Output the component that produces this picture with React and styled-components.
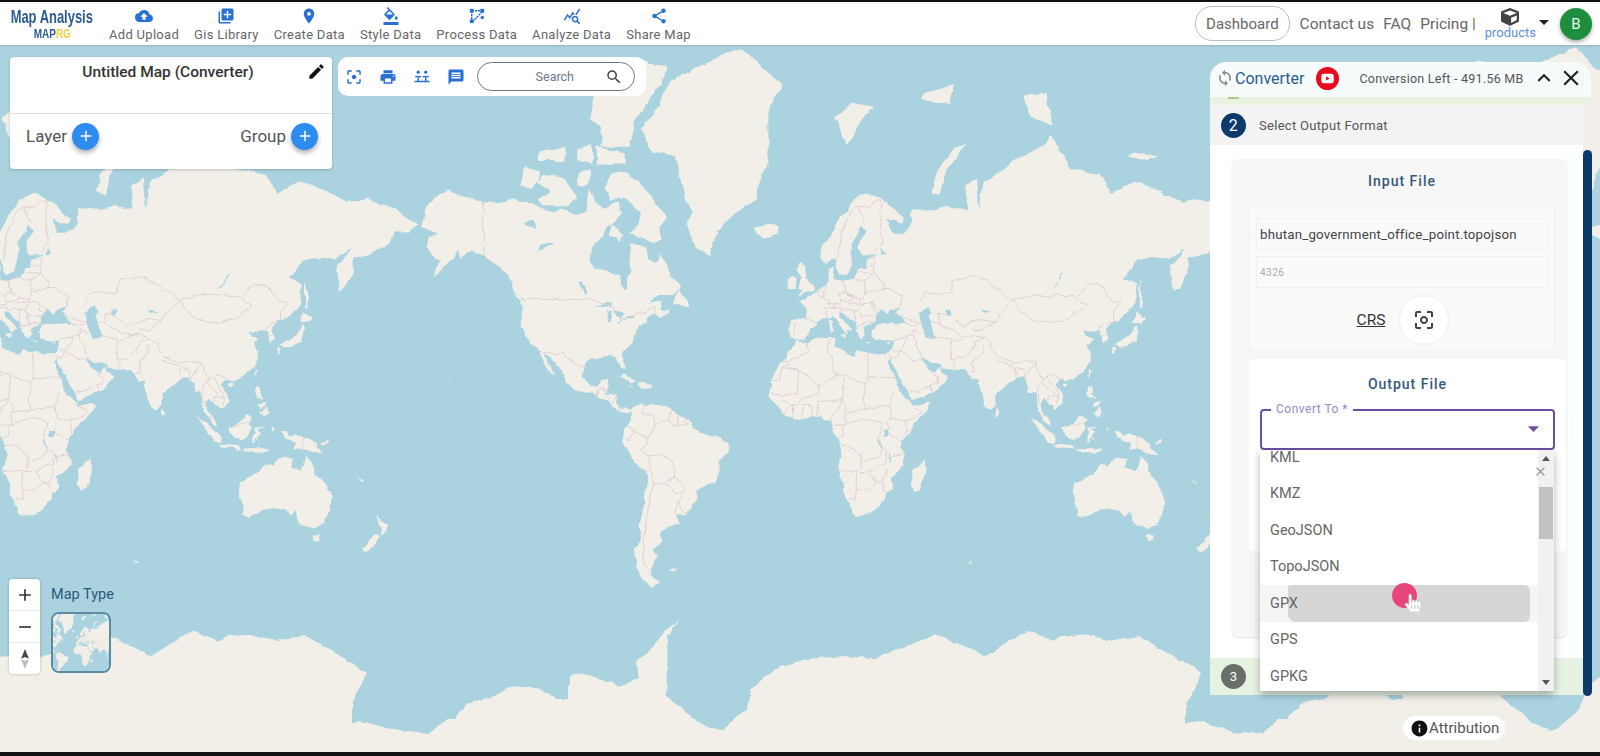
import React from 'react';
import styled, { createGlobalStyle } from 'styled-components';
import {
  MdCloudUpload,
  MdLibraryAdd,
  MdLocationOn,
  MdFormatColorFill,
  MdQueryStats,
  MdShare,
  MdEdit,
  MdAdd,
  MdRemove,
  MdFilterCenterFocus,
  MdPrint,
  MdMessage,
  MdSearch,
  MdArrowDropDown,
  MdKeyboardArrowUp,
  MdClose,
  MdCenterFocusWeak,
  MdSync,
  MdInfo,
  MdNavigation,
} from 'react-icons/md';
import { FaCube, FaHandPointer } from 'react-icons/fa';

const WORLD_WIDTH = 834;
const CENTER_X = 810;
const EQUATOR_Y = 430;

const px = (lon) => CENTER_X + (lon * WORLD_WIDTH) / 360;
const py = (lat) =>
  EQUATOR_Y -
  (WORLD_WIDTH / (2 * Math.PI)) *
    Math.log(Math.tan(Math.PI / 4 + (lat * Math.PI) / 360));

const project = (line) =>
  line
    .trim()
    .split(/\s+/)
    .map((pair) => {
      const [lon, lat] = pair.split(',').map(Number);
      return `${px(lon).toFixed(1)},${py(lat).toFixed(1)}`;
    })
    .join(' ');

// rough coastlines, lon,lat
const LAND = [
  // north america
  '-168,65.6 -166,68.3 -162,70.3 -156.6,71.3 -150,70.5 -141,69.7 -135,69.3 -128,70.2 -124.5,69.5 -120,69.5 -115,68.5 -110,68 -108,68.5 -102,67.8 -97,68 -95,71.5 -92,69.5 -88,68.8 -85,69.5 -82,69.5 -81.5,68 -84,66.5 -87,65.5 -90,64 -93,62 -94.5,59 -92.5,57 -88,56.5 -85,55.3 -82.3,55 -82,53 -80,51.3 -79,52 -79,54.5 -77,56 -78,58.5 -77.5,60.5 -78,62.4 -74,62.2 -70,61 -69.5,59 -66,58.5 -64.5,60.3 -62,58 -60.5,55.5 -56,53 -55.8,51.8 -60,50.2 -65,50.2 -67,49.3 -70,47.5 -65,49 -64.5,47.5 -65,46 -61,46 -60,46.8 -61,45.3 -65,43.6 -66.5,44.5 -67,45 -70,43.7 -70.5,42 -74,40.6 -75.5,38 -76,35.5 -78,34 -81,32 -81.3,30 -80,27 -80.5,25.2 -81.8,26 -82.8,28 -84,30 -86,30.4 -89.5,30.2 -89.5,29.2 -92,29.6 -94.5,29.5 -97,28 -97.5,25.5 -97.8,22.5 -96,19.2 -94.5,18.2 -91.5,18.5 -90.5,21 -87,21.5 -87.5,19 -88.5,16 -86,15.9 -83.5,15.2 -83.6,11 -82,9 -79.5,9.5 -77.4,8.7 -78,7.5 -80,7.3 -81.5,7.7 -83,8.3 -85.5,10 -87.5,13 -91,14 -94,16 -96.5,15.7 -101,17.4 -105,19.5 -105.7,22 -109,26 -112.5,30 -114.7,31.7 -114.3,30 -111,25 -109.5,23 -112,24.8 -115,28 -117,32.5 -120.5,34.5 -122.5,37.5 -124.3,40.3 -124.5,43 -124,47 -124.7,48.4 -123,49 -127,51 -130,54.5 -133,57 -137,58.5 -140,59.7 -146,60.8 -151,59.5 -152,61 -154,59 -158,57 -163,55 -159,58.5 -162,59.8 -165,61.5 -165,63.5 -161,64.3',
  // canadian arctic
  '-64,63 -68,62.5 -72,63.7 -78,64.5 -74,66 -73,68 -79,70 -86,70 -89,71.5 -85,73.7 -78,73.5 -71,71.5 -67,69.5 -62,67 -65,65',
  '-105,69 -115,69 -117.5,70 -112,71 -118,72.5 -115,73.5 -106,73 -101,70',
  '-120,71.5 -125,72 -123,74.3 -116,73.7',
  '-90,76.5 -78,76.5 -75,79 -65,81.5 -62,82.5 -72,83 -85,82 -90,80',
  '-92,74.6 -80,74.6 -80,75.8 -92,76.5',
  '-95,79 -88,78 -87,80.5 -92,81.5',
  '-117,75 -106,75 -106,76.5 -117,76',
  '-100,75 -94,74.5 -94,76.8 -100,76.3',
  '-100,72 -96,72 -94,74 -100,73.8',
  '-87,64 -82,62.7 -80.5,63.8 -85,66',
  '-59,47.7 -53,46.7 -52.7,47.8 -54,49.5 -56,51.5 -57.5,50.5',
  '-128,50.7 -125,50 -123.5,48.4 -125.5,48.9',
  // greenland, iceland
  '-73,78.2 -68,76 -58,75.5 -54,70 -51,68 -53,66 -50,62 -46,60.8 -43.5,59.9 -40,65 -32,68 -23,70 -22,72 -18,75 -18,80 -12,81.5 -30,83.6 -50,82.5 -62,81.5 -65,80',
  '-24,65.5 -22,64 -19,63.4 -14.5,64.4 -14,65.8 -16.5,66.5 -21,65.7',
  // arctic russia and svalbard
  '11,79 16,76.7 20,78.2 27,80 18,80.3',
  '52,71 56,70.7 58,73.5 68,76.8 62,76.2 54,73.5',
  '48,80.5 60,80.2 62,81.5 50,81',
  '95,79.2 105,78.5 102,81 92,80.8',
  '137,75.5 146,75 150,75.5 140,76',
  // eurasia
  '-9,37 -9.5,38.8 -8.8,43.2 -1.8,43.4 -1.2,46 -4.8,48.4 -1.5,48.7 1.5,50.5 4,52 8,53.8 8.2,57 10.8,57.7 10,54.5 14,54 19,54.5 21,57 24,57.2 24,59.3 28,59.7 30,60 25,60 22.5,60 21.3,61.5 22,63 25,65 22.5,65.8 17.5,62.5 18,60 16.5,56.3 14,55.5 13,55.5 11,58.5 10.5,59.3 7,58 5,59 5,62 10,64 14,67.5 19,70 25,71 31,70 41,67 40,66 33,66.8 35,64.5 40,64.5 44,66.2 44,68.5 54,68.5 60,69 68,68.5 67,72 72,73 73,68.5 75,72.5 81,73.5 87,75 100,76.5 104,77.7 113,74 125,73.5 130,71 140,72.5 150,71.5 160,69.7 170,70 180,68.8 185,67.5 190,66 187,64.5 181,65 179,62.5 170,60 163,59.5 163,56 160,53 156.7,51 155.5,56 156,57.8 163,61.5 155,59.3 148,59.5 142,59 135,54.7 141,53 140,48 135,43.7 130.5,42.5 127.5,39.5 129.3,37 126.5,34.5 126.5,37.5 125,39.6 121.5,39 118,39 119,37.3 122.5,37 119.5,35 121.7,31.5 121.5,29 118,24.5 114,22.3 110,21 108,21.6 106,19 109,15 109,11.5 105,8.7 105,10 103,11 100.8,13.5 99.5,11 100,8 103.5,4 104,1.4 101,3 100,6 98.3,8 98,14 97,16.5 94.5,16 94,18.5 91.5,22.7 88.5,21.7 86.5,20 82,16.5 80,15 80,11 78,8.5 76,10 73,17 72.8,21 70,21 69,22.5 67,25 61,25.2 57,25.7 56.5,27 51.5,28 48.5,30 48,29 50,26.5 51.5,25 54,24 56.3,26 56.5,24.2 59.7,22.5 58,20.2 55,17 52,16 45,13 43.3,12.8 42.7,16 39,21 35,28 34.8,29.5 33,28 32.5,30 32.5,31.2 34.3,31.3 36,36 33,36 30,36.3 27.3,37 26.5,39.3 29,41 35,42 41.5,41.5 38,44.5 37,45 39,47 35,46 33.5,44.5 31,46.5 28,44 28,41.7 26,40.8 23.5,40.2 24,38 22.5,36.5 20,39.5 19.3,42 14,45 12.3,45.3 12.5,44 16,41.8 18.4,40 16.5,39.5 16,38 13,41 10,44 6,43.2 3,43 3.2,41.7 0,40 -0.3,38.7 -2,36.8 -5.5,36',
  // africa
  '-5.9,35.8 -2,35.2 3,36.9 10,37.3 11,36.9 10.5,34 15,32.3 19,30.4 20,32.5 25,31.7 29,31 32.5,31.2 32.5,30 34,27 35.5,24 37.3,21 37.5,18.5 39.5,15.5 43,12 44,10.5 51,11.8 50.5,9 47,4.5 42,-1.5 39.5,-4.5 39.2,-8 40.5,-11 40.7,-15 35,-20 35.5,-24 32.8,-26 32.5,-28.5 28,-33 25.5,-34 20,-34.8 18.4,-34 18,-32 15,-27 14.5,-22 11.8,-17 13.7,-11 12,-5 9,-1 9.5,4 6,4.3 4.5,6.3 1,5.8 -2,4.8 -7.5,4.4 -11.5,7 -13.5,9.5 -16.7,12.5 -17.5,14.7 -16.3,19 -17,21 -15,24.5 -13,27.7 -10,29.5 -9.7,31.5 -6.8,34',
  '49.3,-12 50.5,-15.5 47.5,-24.7 45,-25.5 43.5,-23 44.3,-20 44,-17 47,-15',
  // south america
  '-77.4,8.7 -75.5,10.8 -72,12 -71.5,10.8 -68,11 -64,10.5 -62,10.7 -60,8.5 -57,6 -52,4.7 -50,1 -48,-1 -44.5,-2.5 -40,-3 -35.3,-5.5 -35,-9 -39,-13 -39,-17.5 -41,-22 -44.5,-23 -48.5,-25.7 -48.7,-28.5 -52,-32.5 -54,-34.5 -58.3,-34 -57,-37 -62,-39 -65,-41 -63.5,-42.7 -65.5,-45 -67.5,-46 -65.8,-47.5 -69,-51 -68.3,-52.5 -65,-55 -68,-55.7 -72,-54 -75,-51 -75.5,-46 -73,-42 -73.7,-38 -71.5,-30 -70.3,-20 -71,-17.5 -76,-14 -79,-8 -81.3,-5 -80,-2.5 -80.5,0 -78.8,2 -77.3,4 -77.5,7 -78,7.5',
  '-61,-51.5 -58,-51.5 -59,-52.3',
  // australia, nz
  '114,-22 113.5,-26 115,-31 115,-34.3 118,-35 124,-33 129,-31.6 134,-32.5 136,-35 138,-33 138.5,-35.5 140.5,-38 146,-39 150,-37.5 153,-32 153.5,-27 150.5,-23 146.5,-19 145.3,-15 142.6,-10.8 141.5,-15 140.5,-17.5 136,-15.5 136.7,-12 132.5,-11.5 130,-13 129,-15 125,-14.5 122,-18 117,-20.5',
  '145,-41 148.2,-41 148,-43 146.5,-43.5',
  '172.7,-34.5 175.5,-36.8 178.5,-37.8 176.8,-40 175,-41.5 174.7,-39',
  '172.7,-40.5 174.3,-41.7 171,-45 168.5,-46.6 166.5,-45.8 170,-43',
  // south east asia
  '131,-1 134,-0.8 135,-3.3 138,-1.7 144,-3.8 147.5,-6 147,-7 150.5,-10.5 147,-10 143,-9 138,-8.3 138,-5.5 133,-4',
  '109,1.5 111,1.5 113,3 115.5,5.5 117,7 119,5 117.7,3 119,1 116.5,-3.5 114.5,-4 111,-3 110,-1',
  '95.3,5.6 98,4 103.5,-1 106,-3 105.8,-5.8 103,-5 100.5,-2 97.5,2',
  '105.3,-6.5 108,-6.5 113,-7 114.5,-8.5 109,-7.9 106,-7.4',
  '119.5,-5.5 120.3,-3 121,-1 120,1 125,1.5 121.5,0.3 123,-1 121.5,-3 122.5,-5 121,-3.5 120.4,-5.5',
  '120.5,18.5 122.2,18.4 122,15 124,13 120.7,14 120,16',
  '122,7 125.5,9.7 126.5,7 124.5,6',
  '122,11.5 125.5,12 124.5,10 122.5,9.5',
  '115,-8.3 119,-8.3 122,-8.3 125,-8.3 127,-8.3 124,-10.2 120,-10 116,-9',
  '149,-5.5 152,-4.2 152,-5.5 150,-6.3',
  '164,-20.3 167,-22.3 166,-22.3',
  '127.5,1.5 128.5,1 128,-0.8',
  // east asia islands
  '121,25.2 122,25 120.8,22 120.1,23',
  '109,20 111,20 110,18.2 108.7,18.7',
  '80,9.7 81.8,7.5 80.5,6 79.8,7.5',
  '131,34.4 135,33.5 137,34.6 140.5,35.5 142,39.5 141.3,41.4 139.8,39.5 137,37 133,35.5',
  '130,33.5 132,33 131,31 130.2,31.5',
  '132.5,34 134.5,34.2 134,33',
  '140,41.8 141,45.5 145,43.5 143,42',
  '142,54.3 143.5,50 143,46.5 142,46.5 142,50',
  // europe islands
  '-5.5,50 1.5,51.3 1.7,52.8 -1,54.5 -2,56 -2,57.6 -5,58.6 -6,56.5 -3,54.8 -4.7,53 -5.2,51.8 -3,51.4',
  '-10,52 -6.2,52.2 -5.8,54.7 -8.2,55.2 -10,54',
  '8.6,43 9.7,42.5 9.6,39 8.5,39',
  '12.5,38 15.5,38.2 15,36.7',
  '23.5,35.6 26.3,35.3 25,34.9',
  '32.5,35 34.5,35.7 33.8,34.7',
  // caribbean
  '-84.8,22 -80,23.2 -75,20.7 -74.2,20.2 -77.7,19.9 -78,20.8 -82,22.6',
  '-74.4,18.5 -73,20 -69,19.7 -68.5,18.5 -71.5,17.8',
  '-78.3,18.4 -76.3,18.2 -77,17.8',
  '-156,20.4 -155,19.7 -155.7,19',
  '69,-49 70.5,-49.2 69.5,-49.8',
];

const LAKES = [
  '-92,46.8 -88,48.5 -85,47.8 -85,46.6 -88,46.9',
  '-87.8,42 -86.5,42 -85.5,45.6 -87,45.7',
  '-84.5,46 -80,45 -81.7,43.2 -83.5,43.8',
  '-83.3,41.6 -79,42.8 -79,43 -83,42.2',
  '-79.7,43.3 -76.3,43.5 -76.5,44.2 -79,43.9',
  '-124,66 -118,65.3 -120,67',
  '-117,61 -110,62.5 -112,62.8 -116,62',
  '-98,50.5 -96.5,50.5 -98,53.8 -99.5,53.5',
  '47,45 51,47 53,45 51,44 53,41 54,37 50,37 49,40 47.5,43',
  '58.5,46 61,46 60,44 58.5,44',
  '104,51.7 106,52.5 110,55.8 109,55.7 106,53',
  '74,46 79,45.5 74.5,45',
  '30.5,60 32.5,60.5 31,61.5',
  '32,0 34,0 34,-2.5 32,-2.7',
  '29,-4 29.8,-4 31,-8 30.5,-8',
  '34,-10 34.8,-11 35,-14 34.4,-13',
];

const BORDERS = [
  '-123,49 -95,49 -89,48 -84,46.5 -82.5,43 -79,43 -75,45 -71,45 -67.5,47 -67,45',
  '-141,69.7 -141,60 -137,58.5 -130,55',
  '-117,32.5 -111,31.3 -106.5,31.8 -103,29 -97.5,26',
  '-92,14.7 -91,17.5 -89,18 -89,16',
  '-88.5,15.8 -87,13',
  '-83.5,15 -85.5,11',
  '-83,8.5 -83,10',
  '-77.5,8.5 -77.3,7',
  '-72,12 -72.5,7 -67.5,6 -67,2 -70,-4.2 -75,-0.2 -78.8,1.5',
  '-80.3,-3.5 -78.5,-5 -75,-0.2',
  '-70,-4.2 -73,-9 -69.5,-11 -69,-16.5 -70,-17.5 -70.3,-18.3',
  '-69.5,-11 -65.3,-10 -60,-13.5 -58,-17.5 -58,-20',
  '-69,-17.5 -68,-23 -70,-33 -71.5,-40 -72,-50 -68.5,-52.5',
  '-68,-23 -62.5,-22 -58,-20 -54.3,-24 -54.5,-26 -58,-27 -62.5,-22',
  '-54.5,-26 -57.5,-30 -53.5,-33.7',
  '-57.5,-30 -58.3,-34',
  '-60,8.5 -60.7,5 -64,4 -67,2',
  '-60.7,5 -58.5,1.5 -57,2 -54,2.3 -51.7,4',
  '-57,6 -57,2',
  '-54,5.7 -54,2.3',
  '-1.8,43.4 3.2,42.4',
  '-8.8,42 -6.5,42 -7,37.2',
  '2.5,51 6,49.5 8,49 7.6,47.6',
  '6,46.3 7.6,47.6 10,47.3 10,46.3 6,46.3',
  '7.5,43.8 7,45.5',
  '10,46.5 13.7,46.5 13.7,45.6',
  '7,53.3 6,51 6,49.5',
  '14.3,54 15,51 12,50.3 13,48.5 13,47.6 10,47.4',
  '3.4,51.4 6,51.3',
  '15,51 19,49.4 23,49 24,51 23.5,54 19.5,54.4',
  '15,51 18.8,49.5',
  '13,48.7 17,48.7 18.8,49.5',
  '17,48 22,48.2 22.5,49',
  '16.5,47.5 17,48',
  '16.5,46.6 18.8,45.9 21,46.2 22.7,48 26.5,48.2 28.2,45.5 29.5,45.2',
  '21,46.2 22.5,44.4 27,44 28.5,43.7',
  '22.5,44.3 22.5,41.4 26.3,41.8 28,42',
  '26.3,41.8 26,40.8',
  '13.7,45.5 16.5,46.5',
  '19,45.9 19.3,42',
  '22.5,41.3 20.5,41 19.3,42',
  '20,39.7 20.5,41',
  '24,51 32,52 34,52 40,49.7 38.5,47',
  '23.5,54 28,56 32,53.5 32,52',
  '26.5,48.2 30,46',
  '21,56 26.5,56',
  '24.3,58 27.5,57.5',
  '28,59.5 27.5,57.5 28,56',
  '11.2,59 12.5,61 14,65 18,68.5 20.5,69 24,66',
  '20.5,69 25,68.8 28.5,69.8 30.5,69.8 30,65 31.5,62.8 28,60.5',
  '47,48 50,51 55,51 61,51 61.5,54 70,55 77,53.5 83,51 87,49.2',
  '87.5,49 98,50 106,50.3 114,50 116,48 119,47 111.5,43.5 105,41.7 96,42.8 91,45.5 87.5,49',
  '116,49.8 120,53 125,53 131,48 135,48.4 131,45 131,42.7',
  '124.5,40 128,41.8 130.7,42.5',
  '126.7,38 128.5,38.5',
  '87.5,49 82.5,45 80,42.2',
  '53,42 56,41.3 56,45 61,44 66,41 70,42 74,43 80,42.2',
  '70,40 74,39.5 80,42.2',
  '56,41.3 61,39.5 66.5,37.4',
  '54,37.3 61,36.5 61,35.3 66.5,37.4 71,38 75,37',
  '61,29.7 66,29.5 69.5,33 71,36 75,37',
  '61,35.3 61,29.7 63,27 61.6,25.1',
  '75,37 78,35.3 79,32.5 81,30 88,27.7 92,28 97,28.3',
  '80,28.8 88,26.5',
  '74.5,34.5 75,32 70,28 71,24.5 68,23.7',
  '88,26 89,22',
  '89,25.5 92.3,25 92.3,21 94,24 97,28 98.5,24 101,21.5 102,22.5 105.5,23 108,21.6',
  '101,21.5 98,19 98.5,15 99,11',
  '100.5,20 102,18 105,15',
  '102.5,22 104.5,19 107.5,15',
  '102.5,12 103,14 107.5,14.5 106,11',
  '100.2,6.5 102,6',
  '36,36 42,37 44.5,37.5 44.5,39.5',
  '37.5,45 40,43.5 48,42',
  '41.5,41.5 43.5,41 46.5,41.5',
  '44.5,39.7 48.5,38.5',
  '44.5,37.5 46,35 48,30',
  '42,37 41,34.5 39,32.5 44,29 48,29',
  '39,32.5 37,32.5 35.5,33',
  '35,29.5 37.5,30 39,32.5',
  '34.3,31.3 34.8,29.5',
  '43,16.5 47,17 52,19 55,20 55,22.5 52,24',
  '52,19 53,16.7',
  '-2,35 -1.5,32 -8.7,28 -13,27.7',
  '-8.7,27.3 -12,26 -13,21.3 -17,21.3',
  '-12,26 -5,25 -5.5,15.5 -12,14.8 -16.5,16',
  '-5,25 1,21 4,19 12,23.5',
  '8.5,37 7.5,33.5 9.5,30 10,25 12,23.5 15,23 24,19.5',
  '25,31.7 25,22 37,22',
  '25,22 24,19.5 22.5,13 24,8.7 33,10.5 34,10',
  '4,19 3.5,15.5 1,15 -3,13.5 -5.5,10.5 -8,10.3 -11.5,12.3 -12,14.8',
  '3.5,12 14,13 15.5,10 15,7.5 16,2',
  '2.7,6.3 3.5,12',
  '8.7,4.5 14,13',
  '15,23 14,13',
  '15,7.5 24,8.7',
  '16,2 18.5,3.5 27,5 31,3.7',
  '36.5,16 36,14.5 34,10 35,5 41,4 45,5 48,8 43,11',
  '41,4 41,-1.7',
  '34,4 34,0',
  '34,-1 39.2,-4.7',
  '30,-1 31,3.7',
  '30,-1 29,-4.5 30.5,-8 28.5,-12 24,-13 22,-11 17,-7 12.2,-6',
  '34.8,-11.5 40.5,-10.5',
  '30.5,-8 33,-9.5 33,-14 30.5,-15 25,-17.8',
  '22,-11 22,-16.5',
  '12,-17.2 23.5,-17.7',
  '20,-18 20,-28.5 17,-28.5',
  '20,-25 25,-25.5 29,-22 31.5,-22.3 33,-19 33,-16',
  '25.5,-18 29,-22',
  '31.5,-22.3 32,-26',
  '11,-3.5 14,-2.5 14,1.5',
  '9.7,2.2 16,2',
  '-13.2,12.6 -11.5,12.3',
  '-11.5,7 -10,8.5 -8,10.3',
  '-7.5,4.4 -8,7.5 -8,10.3',
  '-3,5 -3,10.9 0.5,11',
  '1.2,6.2 0.3,11',
  '141,-2.6 141,-9',
  '109.5,1.5 114,2.5 117.5,4.2',
];

// antarctic coast, already in page pixels
const ANTARCTICA =
  '398,770 398,731 429,734 444,719 454,719 467,703 490,698 513,686 541,689 556,699 569,699 569,676 584,674 610,681 620,687 638,679 635,661 648,653 663,633 679,619 668,636 666,696 694,719 709,728 724,729 747,708 750,691 763,679 781,666 807,659 845,656 868,659 891,652 906,647 933,634 967,647 985,656 1006,643 1028,631 1053,641 1062,636 1079,634 1109,641 1140,636 1171,654 1201,673 1196,686 1186,703 1186,724 1194,721 1232,731 1232,770';

const World = React.memo(function World() {
  return (
    <>
      <polygon points={ANTARCTICA} fill="#f2efe9" />
      {LAND.map((line, i) => (
        <polygon key={i} points={project(line)} fill="#f2efe9" />
      ))}
      {LAKES.map((line, i) => (
        <polygon key={i} points={project(line)} fill="#aad3df" />
      ))}
      {BORDERS.map((line, i) => (
        <polyline
          key={i}
          points={project(line)}
          fill="none"
          stroke="#dcc9cc"
          strokeWidth="0.8"
        />
      ))}
    </>
  );
});

// rough=true wobbles the straight polygon edges so coasts look less like a low-poly map
function WorldMap({ viewBox, rough }) {
  return (
    <svg viewBox={viewBox} width="100%" height="100%" preserveAspectRatio="xMidYMid slice">
      <defs>
        <filter id="coast" filterUnits="userSpaceOnUse" x="0" y="45" width="1600" height="720">
          <feTurbulence type="fractalNoise" baseFrequency="0.07" numOctaves="3" seed="4" />
          <feDisplacementMap in="SourceGraphic" scale="6" xChannelSelector="R" yChannelSelector="G" />
          <feGaussianBlur stdDeviation="0.45" />
        </filter>
      </defs>
      <rect x="-2000" y="-200" width="6000" height="1400" fill="#aad3df" />
      <g filter={rough ? 'url(#coast)' : undefined}>
        <g transform={`translate(${-WORLD_WIDTH} 0)`}>
          <World />
        </g>
        <World />
        <g transform={`translate(${WORLD_WIDTH} 0)`}>
          <World />
        </g>
      </g>
    </svg>
  );
}

function YoutubeIcon() {
  return (
    <svg width="23" height="23" viewBox="0 0 24 24">
      <circle cx="12" cy="12" r="12" fill="#e8091a" />
      <rect x="5.5" y="7" width="13" height="10" rx="2.5" fill="#fff" />
      <path d="M10.5 9.8v4.4l3.8-2.2z" fill="#e8091a" />
    </svg>
  );
}

function ProcessIcon() {
  return (
    <svg width="1em" height="1em" viewBox="0 0 24 24" fill="currentColor">
      <path d="M5 5h13M5 5v14M19 6l-12 13" stroke="currentColor" strokeWidth="2" fill="none" strokeDasharray="3 1" />
      <rect x="2.5" y="2.5" width="5" height="5" />
      <rect x="16.5" y="2.5" width="5" height="5" />
      <rect x="2.5" y="16.5" width="5" height="5" />
      <circle cx="19" cy="14" r="2.2" />
    </svg>
  );
}

function PinsIcon() {
  return (
    <svg width="1em" height="1em" viewBox="0 0 24 24" fill="currentColor">
      <circle cx="7" cy="5.5" r="2.2" />
      <circle cx="17" cy="5.5" r="2.2" />
      <rect x="3" y="10.5" width="8" height="2" />
      <rect x="13" y="10.5" width="8" height="2" />
      <rect x="2" y="17" width="20" height="2" />
      <rect x="6" y="12.5" width="2" height="5" />
      <rect x="16" y="12.5" width="2" height="5" />
    </svg>
  );
}

const NAV_ITEMS = [
  { label: 'Add Upload', Icon: MdCloudUpload },
  { label: 'Gis Library', Icon: MdLibraryAdd },
  { label: 'Create Data', Icon: MdLocationOn },
  { label: 'Style Data', Icon: MdFormatColorFill },
  { label: 'Process Data', Icon: ProcessIcon },
  { label: 'Analyze Data', Icon: MdQueryStats },
  { label: 'Share Map', Icon: MdShare },
];

const FORMATS = ['KMZ', 'GeoJSON', 'TopoJSON', 'GPX', 'GPS', 'GPKG'];

export default function App() {
  return (
    <Page>
      <GlobalStyle />
      <Navbar>
        <Logo>
          <LogoTitle>Map Analysis</LogoTitle>
          <LogoMark>
            MAP<span>RG</span>
          </LogoMark>
        </Logo>
        <NavItems>
          {NAV_ITEMS.map(({ label, Icon }) => (
            <NavItem key={label}>
              <Icon />
              {label}
            </NavItem>
          ))}
        </NavItems>
        <NavRight>
          <DashboardLink>Dashboard</DashboardLink>
          <NavLink>Contact us</NavLink>
          <NavLink>FAQ</NavLink>
          <NavLink>Pricing |</NavLink>
          <Products>
            <FaCube />
            products
          </Products>
          <Caret />
          <Avatar>B</Avatar>
        </NavRight>
      </Navbar>

      <MapArea>
        <MapLayer>
          <WorldMap viewBox="0 45 1600 707" rough />
        </MapLayer>

        <TitleCard>
          <TitleRow>
            <MapTitle>Untitled Map (Converter)</MapTitle>
            <EditIcon />
          </TitleRow>
          <LayerRow>
            <LayerGroup>
              Layer
              <AddButton>
                <MdAdd />
              </AddButton>
            </LayerGroup>
            <LayerGroup>
              Group
              <AddButton>
                <MdAdd />
              </AddButton>
            </LayerGroup>
          </LayerRow>
        </TitleCard>

        <ToolCard>
          <ToolIcon>
            <MdFilterCenterFocus />
          </ToolIcon>
          <ToolIcon>
            <MdPrint />
          </ToolIcon>
          <ToolIcon>
            <PinsIcon />
          </ToolIcon>
          <ToolIcon>
            <MdMessage />
          </ToolIcon>
          <SearchPill>
            <span>Search</span>
            <MdSearch />
          </SearchPill>
        </ToolCard>

        <ZoomControl>
          <ZoomButton>
            <MdAdd />
          </ZoomButton>
          <ZoomButton>
            <MdRemove />
          </ZoomButton>
          <ZoomButton>
            <Compass>
              <MdNavigation />
              <MdNavigation />
            </Compass>
          </ZoomButton>
        </ZoomControl>

        <MapType>
          <MapTypeLabel>Map Type</MapTypeLabel>
          <Thumb>
            <WorldMap viewBox="600 87 463 470" />
          </Thumb>
        </MapType>

        <Attribution>
          <MdInfo />
          Attribution
        </Attribution>

        <Panel>
          <PanelHeader>
            <PanelTitle>
              <MdSync />
              Converter
            </PanelTitle>
            <YoutubeIcon />
            <ConversionLeft>Conversion Left - 491.56 MB</ConversionLeft>
            <HeaderIcons>
              <MdKeyboardArrowUp />
              <MdClose />
            </HeaderIcons>
          </PanelHeader>
          <DoneStrip>
            <i />
          </DoneStrip>
          <PanelBody>
            <StepRow>
              <StepBadge>2</StepBadge>
              Select Output Format
            </StepRow>
            <PanelScroll>
              <InputCard>
                <CardHeading>Input File</CardHeading>
                <InputInner>
                  <Field>bhutan_government_office_point.topojson</Field>
                  <Field $muted>4326</Field>
                  <CrsRow>
                    <CrsLabel>CRS</CrsLabel>
                    <CrsButton>
                      <MdCenterFocusWeak />
                    </CrsButton>
                  </CrsRow>
                </InputInner>
                <OutputCard>
                  <CardHeading>Output File</CardHeading>
                  <SelectBox>
                    <SelectLabel>Convert To *</SelectLabel>
                    <SelectArrow />
                  </SelectBox>
                </OutputCard>
              </InputCard>
            </PanelScroll>
            <NextStep>
              <StepBadge $grey>3</StepBadge>
            </NextStep>
          </PanelBody>
          <Scrollbar />

          <Dropdown>
            <OptionList>
              <Option $cut>
                <span>KML</span>
              </Option>
              {FORMATS.map((name) => (
                <Option key={name} $hover={name === 'GPX'}>
                  <span>{name}</span>
                </Option>
              ))}
            </OptionList>
            <ListScroll>
              <ScrollArrow />
              <ScrollClose />
              <ScrollThumb />
              <ScrollArrow $down />
            </ListScroll>
            <Cursor>
              <FaHandPointer />
            </Cursor>
          </Dropdown>
        </Panel>
      </MapArea>
    </Page>
  );
}

const GlobalStyle = createGlobalStyle`
  html, body {
    margin: 0;
    padding: 0;
    height: 100%;
    overflow: hidden;
    background: #111;
  }
  body {
    font-family: Roboto, 'Liberation Sans', sans-serif;
  }
`;

const Page = styled.div`
  display: flex;
  flex-direction: column;
  width: 1600px;
  height: 756px;
  box-sizing: border-box;
  border-top: 2px solid #111;
  border-bottom: 4px solid #111;
`;

const Navbar = styled.header`
  display: flex;
  align-items: center;
  height: 43px;
  flex: none;
  background: #fff;
  padding: 0 8px 0 10px;
  box-shadow: 0 1px 2px rgba(0, 0, 0, 0.15);
  position: relative;
  z-index: 2;
`;

const Logo = styled.div`
  display: flex;
  flex-direction: column;
  align-items: center;
  width: 84px;
  flex: none;
`;

const LogoTitle = styled.div`
  font-family: 'Liberation Sans', sans-serif;
  font-weight: 700;
  font-size: 18.5px;
  line-height: 21px;
  white-space: nowrap;
  color: #2b5c94;
  transform: scaleX(0.7);
`;

const LogoMark = styled.div`
  font-family: 'Liberation Sans', sans-serif;
  font-weight: 700;
  font-size: 12.5px;
  line-height: 14px;
  color: #2b5c94;
  transform: scaleX(0.8);

  span {
    color: #f3d23c;
  }
`;

const NavItems = styled.nav`
  display: flex;
  gap: 15px;
  margin-left: 15px;
`;

const NavItem = styled.div`
  display: flex;
  flex-direction: column;
  align-items: center;
  gap: 2px;
  padding-top: 2px;
  font-size: 13px;
  line-height: 16px;
  letter-spacing: 0.3px;
  white-space: nowrap;
  color: #666;

  svg {
    font-size: 18px;
    color: #2a6fd3;
  }
`;

const NavRight = styled.div`
  display: flex;
  align-items: center;
  margin-left: auto;
`;

const DashboardLink = styled.div`
  display: flex;
  align-items: center;
  height: 33px;
  padding: 0 10px;
  border: 1px solid #bdbdbd;
  border-radius: 17px;
  font-size: 15px;
  color: #666;
  margin-right: 10px;
`;

const NavLink = styled.div`
  font-size: 15.5px;
  color: #666;
  margin-right: 9px;
  white-space: nowrap;
`;

const Products = styled.div`
  display: flex;
  flex-direction: column;
  align-items: center;
  font-size: 13px;
  line-height: 14px;
  color: #5f8edc;

  svg {
    font-size: 18px;
    color: #444;
  }
`;

const Caret = styled(MdArrowDropDown)`
  font-size: 24px;
  color: #222;
  margin: -4px -1px 0 -4px;
`;

const Avatar = styled.div`
  display: flex;
  align-items: center;
  justify-content: center;
  width: 32px;
  height: 32px;
  margin-left: 5px;
  border-radius: 50%;
  background: #1e8e3e;
  color: #e8f5e9;
  font-size: 15px;
  box-shadow: 0 2px 4px rgba(0, 0, 0, 0.35);
`;

const MapArea = styled.main`
  position: relative;
  flex: 1;
  overflow: hidden;
`;

const MapLayer = styled.div`
  position: absolute;
  inset: 0;
  line-height: 0;
`;

const TitleCard = styled.section`
  position: absolute;
  top: 12px;
  left: 10px;
  width: 322px;
  height: 112px;
  display: flex;
  flex-direction: column;
  background: #fff;
  border-radius: 4px;
  box-shadow: 0 1px 3px rgba(0, 0, 0, 0.2);
`;

const TitleRow = styled.div`
  flex: 0 0 56px;
  display: flex;
  justify-content: center;
  position: relative;
  border-bottom: 1px solid #e2e2e2;
`;

const MapTitle = styled.div`
  margin: 5px 6px 0 0;
  font-size: 15.5px;
  line-height: 20px;
  font-weight: 500;
  color: #333;
`;

const EditIcon = styled(MdEdit)`
  position: absolute;
  top: 5px;
  right: 6px;
  font-size: 19px;
  color: #111;
`;

const LayerRow = styled.div`
  flex: 1;
  display: flex;
  align-items: center;
  justify-content: space-between;
  padding: 0 14px 11px 16px;
`;

const LayerGroup = styled.div`
  display: flex;
  align-items: center;
  gap: 5px;
  font-size: 17px;
  color: #555;
`;

const AddButton = styled.div`
  display: flex;
  align-items: center;
  justify-content: center;
  width: 27px;
  height: 27px;
  border-radius: 50%;
  background: #2e8bf0;
  color: #fff;
  font-size: 18px;
  box-shadow: 0 3px 5px rgba(0, 0, 0, 0.3);
`;

const ToolCard = styled.section`
  position: absolute;
  top: 12px;
  left: 338px;
  width: 308px;
  height: 39px;
  box-sizing: border-box;
  display: flex;
  align-items: center;
  padding-left: 7px;
  background: #fff;
  border-radius: 10px;
`;

const ToolIcon = styled.div`
  display: flex;
  width: 18px;
  margin-right: 16px;
  font-size: 18px;
  color: #2a6fd3;
`;

const SearchPill = styled.div`
  display: flex;
  align-items: center;
  justify-content: flex-end;
  width: 158px;
  height: 29px;
  box-sizing: border-box;
  margin-left: -4px;
  padding-right: 11px;
  border: 1.5px solid #6d7680;
  border-radius: 15px;
  font-size: 12.5px;
  color: #6c7886;

  svg {
    font-size: 18px;
    margin-left: 31px;
    color: #444;
  }
`;

const ZoomControl = styled.div`
  position: absolute;
  left: 9px;
  top: 534px;
  width: 31px;
  display: flex;
  flex-direction: column;
  background: #fff;
  border-radius: 4px;
  box-shadow: 0 0 3px rgba(0, 0, 0, 0.25);
`;

const ZoomButton = styled.div`
  display: flex;
  align-items: center;
  justify-content: center;
  height: 31px;
  font-size: 20px;
  color: #333;

  & + & {
    border-top: 1px solid #e6e6e6;
  }
`;

const Compass = styled.div`
  display: flex;
  flex-direction: column;
  align-items: center;
  font-size: 12px;
  line-height: 0;
  color: #444;

  svg:last-child {
    transform: rotate(180deg);
    margin-top: -2px;
    color: #bbb;
  }
`;

const MapType = styled.div`
  position: absolute;
  left: 51px;
  top: 541px;
`;

const MapTypeLabel = styled.div`
  font-size: 14.5px;
  line-height: 18px;
  color: #2a5a80;
  margin-bottom: 8px;
`;

const Thumb = styled.div`
  width: 60px;
  height: 61px;
  box-sizing: border-box;
  border: 2px solid #5a8ba3;
  border-radius: 8px;
  overflow: hidden;
  line-height: 0;
`;

const Attribution = styled.div`
  position: absolute;
  left: 1403px;
  top: 671px;
  display: flex;
  align-items: center;
  height: 24px;
  padding: 0 6px 0 7px;
  background: #fff;
  border-radius: 12px;
  font-size: 15px;
  color: #555;

  svg {
    font-size: 19px;
    color: #111;
  }
`;

const Panel = styled.aside`
  position: absolute;
  left: 1210px;
  top: 17px;
  width: 382px;
  height: 633px;
  display: flex;
  flex-direction: column;
`;

const PanelHeader = styled.div`
  flex: 0 0 35px;
  display: flex;
  align-items: center;
  width: 381px;
  box-sizing: border-box;
  padding: 0 7px 3px 6px;
  background: #f6fbfb;
  border-radius: 16px 16px 0 0;
`;

const PanelTitle = styled.div`
  display: flex;
  align-items: center;
  gap: 1px;
  font-size: 16px;
  color: #2d5d8c;
  margin-right: 12px;

  svg {
    font-size: 18px;
    color: #888;
  }
`;

const ConversionLeft = styled.div`
  margin-left: 20px;
  font-size: 12.5px;
  letter-spacing: 0.25px;
  color: #555;
  white-space: nowrap;
`;

const HeaderIcons = styled.div`
  display: flex;
  align-items: center;
  margin-left: auto;
  gap: 1px;
  font-size: 26px;
  color: #222;
`;

const DoneStrip = styled.div`
  flex: 0 0 8px;
  width: 381px;
  background: #e9f3df;
  position: relative;

  i {
    position: absolute;
    left: 18px;
    top: 0;
    width: 11px;
    height: 2px;
    background: #a5cf8b;
  }
`;

const PanelBody = styled.div`
  flex: 1;
  width: 373px;
  display: flex;
  flex-direction: column;
  background: #fff;
`;

const StepRow = styled.div`
  flex: 0 0 40px;
  display: flex;
  align-items: center;
  gap: 13px;
  padding-left: 11px;
  background: #f3f3f3;
  font-size: 13px;
  letter-spacing: 0.3px;
  color: #555;
`;

const StepBadge = styled.div`
  display: flex;
  align-items: center;
  justify-content: center;
  width: 25px;
  height: 25px;
  border-radius: 50%;
  background: ${(p) => (p.$grey ? '#6a6f69' : '#0d3a6b')};
  color: #fff;
  font-size: ${(p) => (p.$grey ? '13px' : '16px')};
`;

const PanelScroll = styled.div`
  flex: 1;
  padding: 14px 16px 21px 22px;
  min-height: 0;
`;

const InputCard = styled.div`
  height: 100%;
  box-sizing: border-box;
  padding: 13px 12px 0 17px;
  background: #f7f7f7;
  border-radius: 6px;
  box-shadow: 0 1px 2px rgba(0, 0, 0, 0.12);
  display: flex;
  flex-direction: column;
`;

const CardHeading = styled.div`
  text-align: center;
  font-size: 14px;
  line-height: 18px;
  font-weight: 500;
  letter-spacing: 1px;
  color: #33587a;
`;

const InputInner = styled.div`
  width: 306px;
  height: 145px;
  flex: none;
  box-sizing: border-box;
  margin-top: 16px;
  padding: 11px 6px 0;
  background: #fafafa;
  border: 1px solid #f1f1f1;
  display: flex;
  flex-direction: column;
  gap: 6px;
`;

const Field = styled.div`
  height: 32px;
  flex: none;
  box-sizing: border-box;
  display: flex;
  align-items: center;
  padding-left: 3px;
  border: 1px solid #f1f1f1;
  font-size: ${(p) => (p.$muted ? '10px' : '13.3px')};
  color: ${(p) => (p.$muted ? '#aaa' : '#444')};
  letter-spacing: ${(p) => (p.$muted ? '0.5px' : '0.2px')};
  white-space: nowrap;
`;

const CrsRow = styled.div`
  display: flex;
  align-items: center;
  justify-content: center;
  gap: 14px;
  margin-top: 1px;
  padding-left: 2px;
`;

const CrsLabel = styled.div`
  font-size: 15.5px;
  text-decoration: underline;
  color: #333;
`;

const CrsButton = styled.div`
  display: flex;
  align-items: center;
  justify-content: center;
  width: 50px;
  height: 50px;
  border-radius: 50%;
  background: #fff;
  border: 1px solid #eee;
  box-sizing: border-box;
  font-size: 24px;
  color: #444;
`;

const OutputCard = styled.div`
  width: 317px;
  height: 192px;
  flex: none;
  box-sizing: border-box;
  margin-top: 8px;
  padding: 16px 11px 0;
  background: #fff;
  border-radius: 4px;
`;

const SelectBox = styled.div`
  position: relative;
  height: 41px;
  box-sizing: border-box;
  margin-top: 15.5px;
  border: 2px solid #6a4fa3;
  border-radius: 4px;
`;

const SelectLabel = styled.span`
  position: absolute;
  top: -9px;
  left: 9px;
  padding: 0 5px;
  background: #fff;
  font-size: 12px;
  line-height: 14px;
  letter-spacing: 0.5px;
  color: #9a86c6;
`;

const SelectArrow = styled(MdArrowDropDown)`
  position: absolute;
  top: 4px;
  right: 6px;
  font-size: 27px;
  color: #6a4fa3;
`;

const NextStep = styled.div`
  flex: 0 0 37px;
  display: flex;
  align-items: center;
  padding-left: 11px;
  background: #e7f3e2;
`;

const Scrollbar = styled.div`
  position: absolute;
  right: 0;
  top: 88px;
  bottom: -1px;
  width: 9px;
  background: #0c3a69;
  border-radius: 5px;
`;

const Dropdown = styled.div`
  position: absolute;
  left: 50px;
  top: 388px;
  width: 294px;
  height: 241px;
  display: flex;
  background: #fff;
  box-shadow: 0 4px 8px rgba(0, 0, 0, 0.3);
  overflow: hidden;
`;

const OptionList = styled.ul`
  flex: 1;
  margin: 0;
  padding: 0;
  list-style: none;
`;

const Option = styled.li`
  position: relative;
  height: 36.5px;
  margin-top: ${(p) => (p.$cut ? '-11px' : '0')};
  display: flex;
  align-items: center;
  padding-left: 10px;
  font-size: 14.5px;
  color: #666;
  background: ${(p) => (p.$hover ? '#f5f5f5' : 'transparent')};

  ${(p) =>
    p.$hover &&
    `
    &::before {
      content: '';
      position: absolute;
      top: 0;
      bottom: 0;
      left: 28px;
      right: 8px;
      background: #d6d6d6;
      border-radius: 3px 6px 6px 8px;
    }
  `}

  span {
    position: relative;
  }
`;

const ListScroll = styled.div`
  width: 16px;
  position: relative;
  display: flex;
  flex-direction: column;
  justify-content: space-between;
  align-items: center;
  background: #f1f1f1;
`;

const ScrollArrow = styled.i`
  margin: ${(p) => (p.$down ? '0 0 6px' : '6px 0 0')};
  border-left: 4px solid transparent;
  border-right: 4px solid transparent;
  ${(p) =>
    p.$down ? 'border-top: 5px solid #555;' : 'border-bottom: 5px solid #555;'}
`;

const ScrollThumb = styled.div`
  position: absolute;
  top: 37px;
  left: 1px;
  width: 14px;
  height: 52px;
  background: #c1c1c1;
`;

const ScrollClose = styled(MdClose)`
  position: absolute;
  top: 14px;
  left: -5px;
  font-size: 15px;
  color: #999;
`;

const Cursor = styled.div`
  position: absolute;
  left: 132px;
  top: 133px;
  width: 25px;
  height: 25px;
  border-radius: 50%;
  background: #e8457a;

  svg {
    position: absolute;
    left: 12px;
    top: 11px;
    font-size: 18px;
    color: #fff;
    stroke: #aaa;
    stroke-width: 12px;
  }
`;
